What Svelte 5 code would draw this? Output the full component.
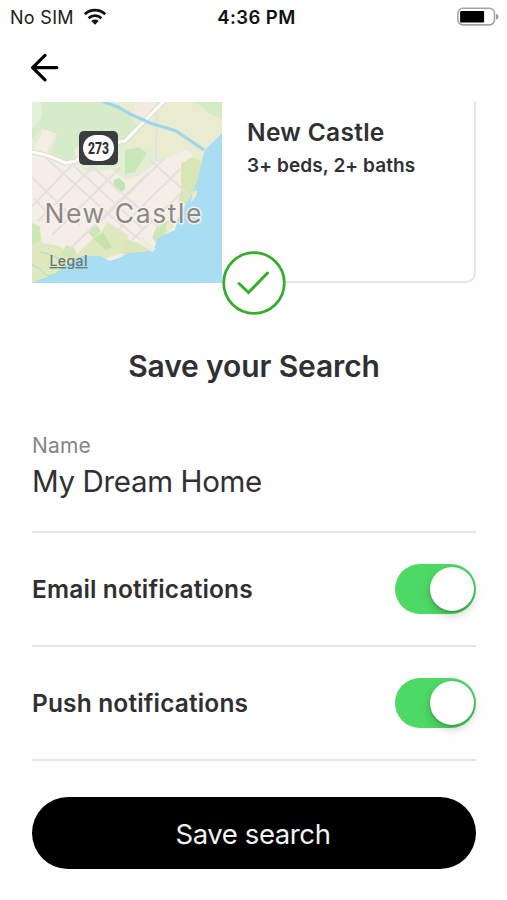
<script>
    let name = 'My Dream Home';
    let notifications = [
        { label: 'Email notifications', on: true },
        { label: 'Push notifications', on: true }
    ];
</script>

<style>
    :global(body) {
        background: #fefefe;
    }

    .screen {
        width: 507px;
        height: 900px;
        overflow: hidden;
        font-family: Inter, "Liberation Sans", sans-serif;
        color: #303032;
    }

    .status {
        display: grid;
        grid-template-columns: 1fr auto 1fr;
        align-items: center;
        height: 34px;
        padding: 0 8px 0 10px;
        font-size: 18px;
        color: #1c1c1c;
    }

    .carrier {
        display: flex;
        align-items: center;
        gap: 9px;
        letter-spacing: 0.3px;
    }

    .time {
        padding-left: 4px;
        font-size: 18.5px;
        font-weight: 600;
        color: #111;
        letter-spacing: 0.4px;
    }

    .battery {
        justify-self: end;
    }

    .status svg,
    .back svg,
    .map,
    .check {
        display: block;
    }

    .nav {
        height: 67px;
        padding-left: 30px;
    }

    .back {
        padding: 19px 0 0;
        border: 0;
        background: none;
    }

    .content {
        padding: 0 31px 0 32px;
    }

    .card {
        position: relative;
        display: flex;
        box-sizing: border-box;
        height: 182px;
        border: solid #e6e6e8;
        border-width: 0 2px 2px 0;
        border-radius: 0 0 10px 0;
    }

    .map {
        flex: none;
        margin-top: 1px;
        width: 190px;
        height: 181px;
    }

    .details {
        padding: 16px 0 0 25px;
    }

    .details h2 {
        margin: 0;
        font-size: 24.5px;
        line-height: 31px;
        font-weight: 600;
        letter-spacing: 0.3px;
    }

    .details p {
        margin: 5px 0 0;
        font-size: 19px;
        line-height: 26px;
        font-weight: 600;
        letter-spacing: 0.1px;
    }

    .check {
        position: absolute;
        left: 190px;
        bottom: -34px;
    }

    h1 {
        margin: 63px 0 0;
        font-size: 30px;
        line-height: 40px;
        font-weight: 600;
        letter-spacing: -0.12px;
        text-align: center;
    }

    .field {
        display: flex;
        flex-direction: column;
        box-sizing: border-box;
        height: 147px;
        padding-top: 47px;
        border-bottom: 2px solid #e5e5e6;
    }

    .field .label {
        font-size: 21px;
        line-height: 26px;
        letter-spacing: 0.2px;
        color: #858587;
    }

    .field .value {
        margin-top: 4px;
        font-size: 29.5px;
        line-height: 36px;
        letter-spacing: -0.35px;
    }

    .row {
        display: flex;
        align-items: center;
        justify-content: space-between;
        box-sizing: border-box;
        height: 114px;
        border-bottom: 2px solid #e5e5e6;
        font-size: 24.5px;
        font-weight: 600;
        letter-spacing: 0.15px;
    }

    .toggle {
        display: flex;
        box-sizing: border-box;
        width: 81px;
        height: 50px;
        padding: 3px 2px 3px 3px;
        border: 0;
        border-radius: 25px;
        background: #ddd;
    }

    .toggle.on {
        justify-content: flex-end;
        background: #4cd964;
    }

    .knob {
        width: 44px;
        height: 44px;
        border-radius: 50%;
        background: #fefefe;
        box-shadow: 0 4px 9px rgba(0, 0, 0, 0.2), 0 1px 2px rgba(0, 0, 0, 0.22);
    }

    .save {
        display: block;
        width: 444px;
        height: 72px;
        margin-top: 36px;
        padding: 1px 2px 0 0;
        border: 0;
        border-radius: 36px;
        background: #000;
        color: #f4f4f4;
        font: 400 27.5px Inter, "Liberation Sans", sans-serif;
        letter-spacing: -0.4px;
    }
</style>

<div class="screen">
    <div class="status">
        <div class="carrier">
            <span class="sim">No SIM</span>
            <svg width="24" height="18" viewBox="0 0 24 18">
                <g fill="none" stroke="#111" stroke-width="2.8">
                    <path d="M1.8 6.2a15 15 0 0 1 20.4 0" />
                    <path d="M5.6 10.2a9.4 9.4 0 0 1 12.8 0" />
                </g>
                <path d="M8.3 13a5.4 5.4 0 0 1 7.4 0L12 16.8z" fill="#111" />
            </svg>
        </div>
        <span class="time">4:36 PM</span>
        <svg class="battery" width="42" height="20" viewBox="0 0 42 20">
            <rect x="0.9" y="1.3" width="36.6" height="16.6" rx="5" fill="none" stroke="#a4a4a4" stroke-width="1.6" />
            <rect x="3.1" y="4" width="24" height="11.6" rx="1.2" />
            <path d="M39 6.8q2.4.6 2.4 3t-2.4 3z" fill="#999" />
        </svg>
    </div>

    <div class="nav">
        <button class="back" aria-label="Back">
            <svg width="30" height="30" viewBox="0 0 30 30" fill="none" stroke="#000" stroke-width="3.2" stroke-linecap="round" stroke-linejoin="round">
                <path d="M26.8 14.6H2.6M15 2.4L2.6 14.6 15 26.8" />
            </svg>
        </button>
    </div>

    <div class="content">
        <div class="card">
            <svg class="map" viewBox="0 0 190 181">
                <rect width="190" height="181" fill="#f4eee7" />
                <!-- parks and fields -->
                <path d="M0 0h190v60l-24 10-6-19-8-5-18 10-12 6-16 12-12 4-14-10-24 2-14-8-9 1-20-9-13-4z" fill="#e2edd3" />
                <path d="M88 0h102v50l-22 10-10-14-24 10-16-8-24-2z" fill="#eaecd2" />
                <path d="M0 0h48l24 0 25 12 11 16-14 14-14 6-20 3-10 8-16 0-14-7 5-20-16-5-9 10z" fill="#d5ebc9" />
                <path d="M0 26q14-9 9-26H0z" fill="#e3efd8" />
                <path d="M158 0h32v16q-14-2-18-10-5-4-14-6z" fill="#d5ebc6" />
                <path d="M103 0h24l-14 15-12-4z" fill="#f1ebe1" />
                <path d="M10 27l14 4-9 20-15-4q8-8 10-20z" fill="#f2eee2" />
                <path d="M42 48l10-7v14l-8 4z" fill="#f1eee2" />
                <path d="M93 48l14-3 8 6-12 19-10 2z" fill="#c9e8b9" />
                <path d="M82 78l5-2 6 5v6l-5 4-6-5z" fill="#bfe6b0" />
                <path d="M0 121l8 4 2 16 18 3 10 10 8-12 9-13 6-5 8 8 6-12 21 13-2 17-32 10-52 21H0z" fill="#dfe8be" />
                <path d="M0 121l8 4v14l-8 4z" fill="#cce8b7" />
                <path d="M34 143l12 4-5 11-12-4z" fill="#d2e7b8" />
                <path d="M38 138l16-14 9 10-18 18z" fill="#f4eee7" />
                <path d="M55 129l9-6 5 6-8 7z" fill="#cee7b9" />
                <path d="M62 137l9-7 9 15-6 3z" fill="#c5e4a9" />
                <path d="M92 137l14 4 14 8-10 4-20-1z" fill="#dde6b9" />
                <path d="M149 62l11-7 9 4-2 18-6 24-15 1 3-15z" fill="#d7e6b4" />
                <path d="M125 124l13-6-4 12-9 11-5-5z" fill="#cee6b5" />
                <!-- streets -->
                <g fill="none" stroke="#e6e0dd" stroke-width="1.9">
                    <path d="M14 56l68 61 28 22M0 75l48 48M40 62l72 66M56 60l72 66M84 86l44 38M116 56l42 38M0 104l42-43M6 119l62-61M20 133l68-67M38 147l78-76M68 120l64-63M84 130l64-63M100 138l48-46M2 96l16 18M125 0l-1 58" />
                </g>
                <path d="M0 50q18 3 33 11l11-2 11-9 20-8 18-3L133-2" fill="none" stroke="#d9d8cf" stroke-width="4.8" />
                <path d="M0 50q18 3 33 11l11-2 11-9 20-8 18-3L133-2" fill="none" stroke="#fffefa" stroke-width="3.2" />
                <path d="M69-1l17 6 12 7 20 9 26 8 28 19" fill="none" stroke="#9fd7ea" stroke-width="3.2" />
                <!-- river -->
                <path d="M190 31l-17 17-4 14-3 16-6 14-8 13-7 13-2 10-12 5-6 4-3 11-12 2-14 1-9 5-9 3-9-5-20 0-10 6-18 13-12 4-9 4V181H190z" fill="#a9ddf2" />
                <path d="M109 134l15 13-4 3-14-12z" fill="#efebe1" />
                <path d="M160 90l5-2v5l-6 8zM134 122l8-3v7l-8 5z" fill="#e7eac6" />
                <path d="M0 163q9 3 12 8t10 1M8 150q19 3 27 16" fill="none" stroke="#a9d8cf" stroke-width="1" />
                <rect x="47" y="29" width="39" height="34" rx="5" fill="#3b3c3e" />
                <rect x="51" y="33" width="31" height="26" rx="13" fill="#fff" />
                <text x="66.5" y="52" text-anchor="middle" textLength="21" lengthAdjust="spacingAndGlyphs" font-family="Roboto, sans-serif" font-size="16.5" font-weight="800" fill="#2d2d2f">273</text>
                <text x="12.5" y="121" textLength="157" font-family="Inter, sans-serif" font-size="26.5" fill="#8b8987" stroke="#f8f4ee" stroke-opacity="0.85" stroke-width="3" stroke-linejoin="round" paint-order="stroke">New Castle</text>
                <text x="17.5" y="164" textLength="38" font-family="Inter, sans-serif" font-size="14" font-weight="500" fill="#687571" text-decoration="underline">Legal</text>
            </svg>
            <div class="details">
                <h2>New Castle</h2>
                <p>3+ beds, 2+ baths</p>
            </div>
            <svg class="check" width="64" height="64" viewBox="0 0 64 64">
                <circle cx="32" cy="32" r="30.3" fill="#fefefe" stroke="#36ad2b" stroke-width="2.8" />
                <path d="M17 32.5l9.5 9L45.5 22" fill="none" stroke="#36ad2b" stroke-width="3" stroke-linecap="round" />
            </svg>
        </div>

        <h1>Save your Search</h1>

        <div class="field">
            <span class="label">Name</span>
            <span class="value">{name}</span>
        </div>

        {#each notifications as item}
            <div class="row">
                <span>{item.label}</span>
                <button class="toggle" class:on={item.on} aria-label={item.label} on:click={() => (item.on = !item.on)}>
                    <span class="knob"></span>
                </button>
            </div>
        {/each}

        <button class="save">Save search</button>
    </div>
</div>
